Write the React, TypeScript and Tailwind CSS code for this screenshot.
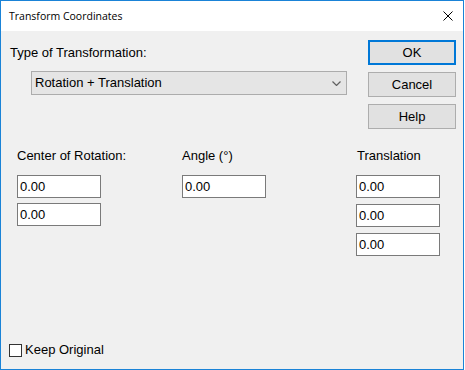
import React from 'react'

const font = { fontFamily: '"Liberation Sans", Arial, sans-serif' }

function Field({ value }: { value: string }) {
    return (
        <div className="w-[84px] h-[23px] bg-white border border-[#7a7a7a] pl-[2px] text-[13px] leading-[21px] text-black">
            {value}
        </div>
    )
}

function Button({ label, primary }: { label: string; primary?: boolean }) {
    return (
        <div
            className={
                primary
                    ? 'w-[88px] h-[25px] bg-[#e1e1e1] border-2 border-[#0078d7] flex items-center justify-center text-[13px] text-black'
                    : 'w-[88px] h-[25px] bg-[#e1e1e1] border border-[#adadad] flex items-center justify-center text-[13px] text-black'
            }
        >
            {label}
        </div>
    )
}

export default function App() {
    return (
        <div className="w-[465px] h-[370px] bg-white" style={font}>
            <div className="w-[464px] h-[370px] border border-[#1a83d7] flex flex-col bg-[#f0f0f0]">
                {/* title bar */}
                <div className="h-[30px] bg-white flex items-center pl-[8px] pr-[10px]">
                    <p
                        className="text-[10.5px] text-black flex-1 pt-[1px]"
                        style={{ fontFamily: '"Open Sans", "Noto Sans", sans-serif' }}
                    >
                        Transform Coordinates
                    </p>
                    <svg width="10" height="10" viewBox="0 0 10 10">
                        <path d="M0.5 0.5 L9.5 9.5 M9.5 0.5 L0.5 9.5" stroke="#000" strokeWidth="1" />
                    </svg>
                </div>

                {/* top section */}
                <div className="flex">
                    <div className="flex flex-col pl-[9px] pt-[14px]">
                        <p className="text-[13px] leading-[16px] text-black">Type of Transformation:</p>
                        <div className="ml-[21px] mt-[10px] w-[316px] h-[24px] bg-[#e5e5e5] border border-[#acacac] flex items-center pl-[3px] pr-[3px]">
                            <span className="flex-1 text-[13px] text-black">Rotation + Translation</span>
                            <svg width="9" height="5" viewBox="0 0 9 5" className="mr-[2px]">
                                <path d="M0.5 0.5 L4.5 4.5 L8.5 0.5" stroke="#606060" strokeWidth="1.2" fill="none" />
                            </svg>
                        </div>
                    </div>
                    <div className="ml-auto mr-[7px] pt-[9px] flex flex-col gap-[7px]">
                        <Button label="OK" primary />
                        <Button label="Cancel" />
                        <Button label="Help" />
                    </div>
                </div>

                {/* coordinates */}
                <div className="flex mt-[19px] pl-[16px] text-[13px] text-black">
                    <div className="w-[165px] flex flex-col">
                        <p className="leading-[16px]">Center of Rotation:</p>
                        <div className="mt-[11px] flex flex-col gap-[5px]">
                            <Field value="0.00" />
                            <Field value="0.00" />
                        </div>
                    </div>
                    <div className="w-[174px] flex flex-col">
                        <p className="leading-[16px]">Angle (°)</p>
                        <div className="mt-[11px] flex flex-col gap-[5px]">
                            <Field value="0.00" />
                        </div>
                    </div>
                    <div className="flex flex-col">
                        <p className="leading-[16px] pl-[1px]">Translation</p>
                        <div className="mt-[11px] flex flex-col gap-[6px]">
                            <Field value="0.00" />
                            <Field value="0.00" />
                            <Field value="0.00" />
                        </div>
                    </div>
                </div>

                {/* keep original */}
                <div className="mt-auto mb-[11px] pl-[8px] flex items-center gap-[3px]">
                    <div className="w-[13px] h-[13px] bg-white border border-[#333]" />
                    <span className="text-[13px] leading-[16px] text-black">Keep Original</span>
                </div>
            </div>
        </div>
    )
}
